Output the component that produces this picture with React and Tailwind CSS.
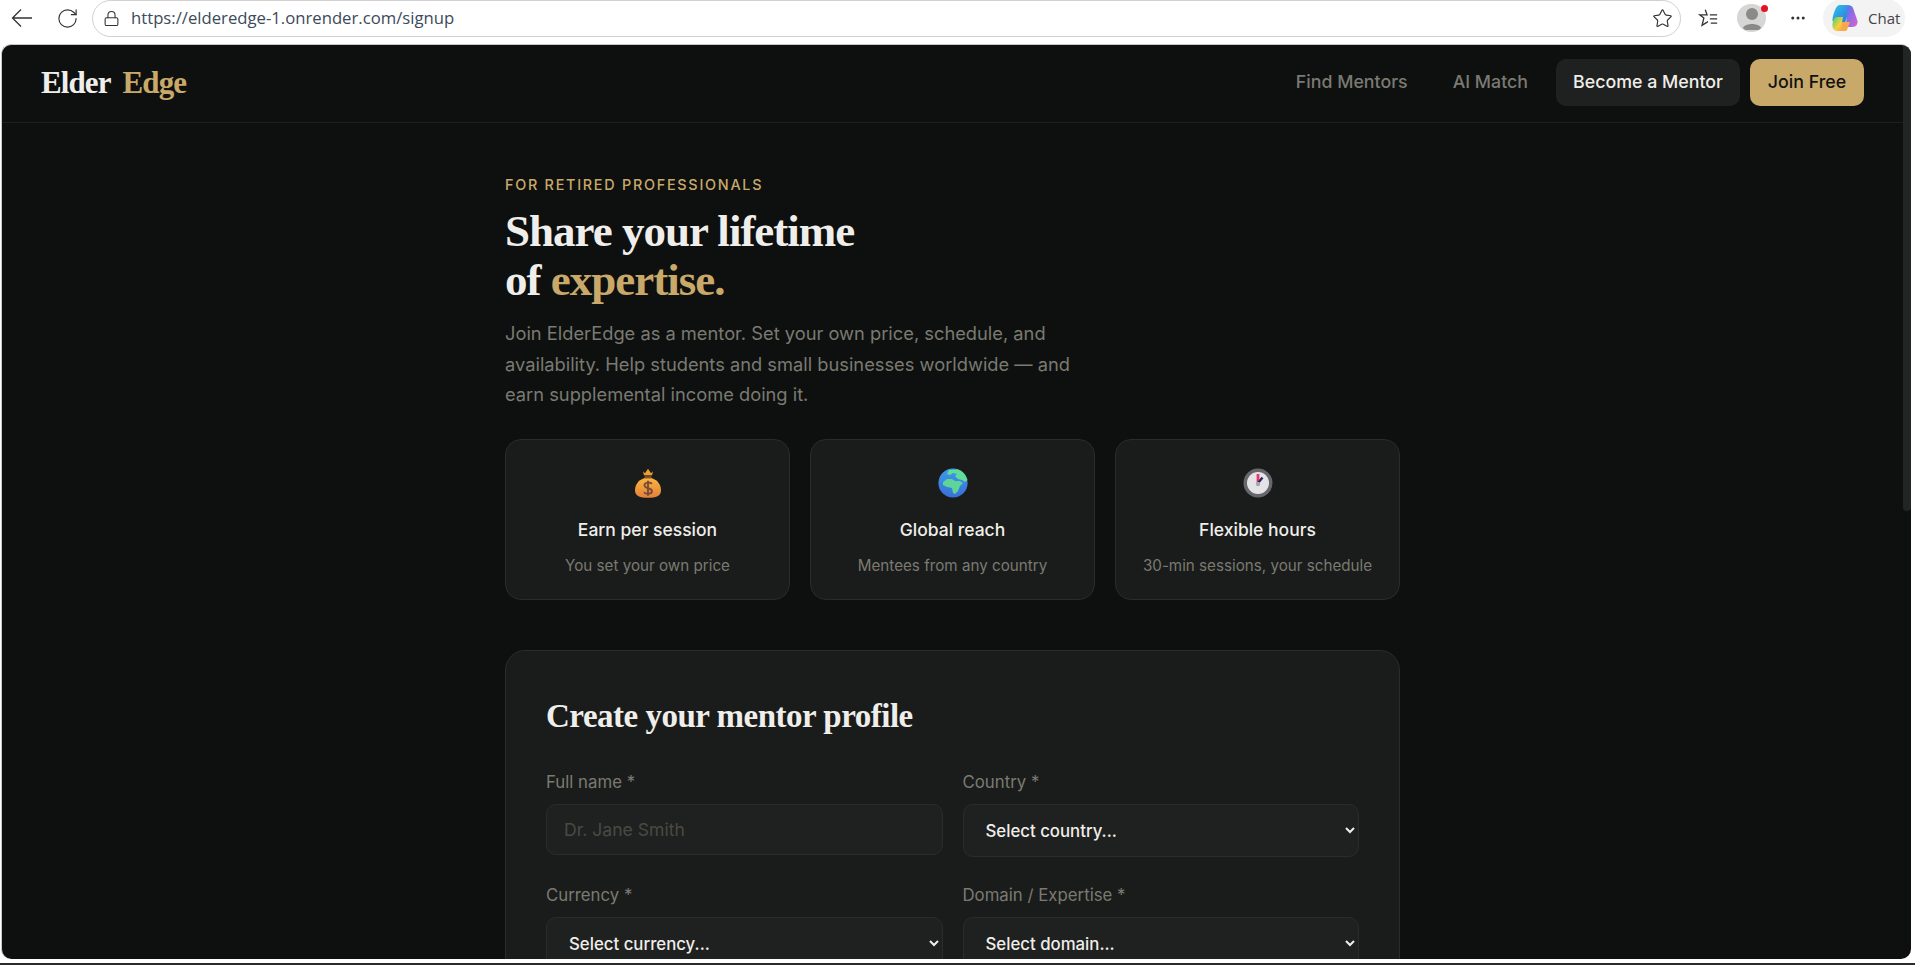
import { RotateCw, Lock, Star, MoreHorizontal } from 'lucide-react'

const sans = 'font-["Inter",sans-serif]'
const serif = 'font-["Liberation_Serif",serif]'

const MoneyBag = () => (
  <svg width="26" height="30" viewBox="2 2 26 29.5">
    <defs>
      <linearGradient id="bag" x1="0" y1="0" x2="0" y2="1">
        <stop offset="0" stopColor="#fbb43c" />
        <stop offset="1" stopColor="#e2813a" />
      </linearGradient>
    </defs>
    <path d="M10 5 L12 7 L15 2.5 L18 7 L20 5 L19 9 H11 Z" fill="#f0a030" />
    <rect x="11.5" y="9" width="7" height="3" fill="#7a4a2a" />
    <path d="M11 12 H19 C25 14 28 19 28 24 C28 30 23 31.5 15 31.5 C7 31.5 2 30 2 24 C2 19 5 14 11 12 Z" fill="url(#bag)" />
    <path d="M19 17.5 C17 15.5 11.5 16 11.5 19 C11.5 23 19 21 19 25 C19 28 13 28.5 11 26 M15 14.5 V29.5" fill="none" stroke="#7a4a3a" strokeWidth="1.9" />
  </svg>
)

const Globe = () => (
  <svg width="30" height="30" viewBox="0 0 30 30">
    <defs>
      <linearGradient id="sea" x1="0" y1="0" x2="0" y2="1">
        <stop offset="0" stopColor="#3d9be8" />
        <stop offset="1" stopColor="#3a6fd8" />
      </linearGradient>
    </defs>
    <circle cx="15" cy="15" r="14.6" fill="url(#sea)" />
    <path d="M11 2 L20 1.5 C25 3 28 7 29.5 12 L27 14 L24 12 L20 11 L17 8 L19 6 L15 5 L12 7 L9 6 Z" fill="#62dc9a" />
    <path d="M5 14 L9 11 L14 11 L17 13 L22 13 L25 15 L22 18 L20 23 L17 26 L15 25 L14 20 L9 19 L5 17 Z" fill="#5ed39a" />
  </svg>
)

const Clock = () => (
  <svg width="30" height="30" viewBox="0 0 30 30">
    <circle cx="15" cy="15" r="14.5" fill="#67676b" />
    <circle cx="15" cy="15" r="11" fill="#e4e4e8" />
    <rect x="13.6" y="6" width="2.8" height="9" fill="#e8386a" />
    <path d="M15 15 L19.5 9.5" stroke="#32275e" strokeWidth="2.4" />
    <circle cx="15" cy="16" r="2.2" fill="#a9a9ad" />
  </svg>
)

const Copilot = () => (
  <svg width="26" height="28" viewBox="0 0 26 28">
    <defs>
      <linearGradient id="cpa" x1="0" y1="0" x2="1" y2="1">
        <stop offset="0" stopColor="#2fc4e8" />
        <stop offset="1" stopColor="#2f6fe0" />
      </linearGradient>
      <linearGradient id="cpb" x1="0" y1="0" x2="1" y2="1">
        <stop offset="0" stopColor="#3fd07a" />
        <stop offset="0.6" stopColor="#f5d13c" />
        <stop offset="1" stopColor="#f59a2c" />
      </linearGradient>
      <linearGradient id="cpc" x1="0" y1="0" x2="1" y2="1">
        <stop offset="0" stopColor="#4a78f0" />
        <stop offset="1" stopColor="#e060d0" />
      </linearGradient>
    </defs>
    <path d="M8 1 H16 C18 1 18.5 2.5 18 4 L13 19 H4 C1.5 19 0 17.5 0.5 15 C1.5 9 4 1 8 1 Z" fill="url(#cpa)" />
    <path d="M15 3 C17 0.5 20 1 21 4 L25.5 17 C26 20 24 23 20.5 23 L14 23 Z" fill="url(#cpc)" />
    <path d="M5 13 H11 L9 24 C8.5 26.5 7 27 5 27 C2 27 0 24 0.5 20 C1 16 2.5 13 5 13 Z" fill="url(#cpb)" />
    <path d="M10 18 H18 L15 26 C14.5 27 13 27 11 27 H6 C8 27 9 25 10 18 Z" fill="#f7a84a" />
  </svg>
)

const Toolbar = () => (
  <div className="flex h-[44px] shrink-0 items-center bg-white pb-[8px] pr-[10px]">
    <svg className="ml-[11px]" width="22" height="20" viewBox="0 0 22 20" fill="none" stroke="#333" strokeWidth="1.3">
      <path d="M21 10 H1.5 M10 1.5 L1.5 10 L10 18.5" />
    </svg>
    <RotateCw className="ml-[23px] size-[23px] text-[#333]" strokeWidth={1.2} />
    <div className="ml-[13px] flex h-[37px] flex-1 items-center rounded-[19px] border border-[#d0d0d0] pl-[10px] pr-[7px]">
      <Lock className="size-[17px] text-[#333]" strokeWidth={1.5} />
      <span className='ml-[11px] flex-1 font-["Open_Sans",sans-serif] text-[16.7px] text-[#3c4a5a]'>https://elderedge-1.onrender.com/signup</span>
      <Star className="size-[21px] text-[#333]" strokeWidth={1.3} />
    </div>
    <svg className="ml-[16px]" width="22" height="22" viewBox="0 0 24 24" fill="none" stroke="#333" strokeWidth="1.4">
      <path d="M9 3 L11 8.5 H3 L7.5 12 L5.5 20 L12 16" />
      <path d="M14 8.5 H22 M14 13 H22 M15 17.5 H22" />
    </svg>
    <div className="relative ml-[18px] flex h-[28px] w-[29px] items-center justify-center rounded-full bg-[#d6d6d4]">
      <svg width="24" height="28" viewBox="0 0 24 28" className="rounded-full">
        <circle cx="12" cy="10" r="6" fill="#8a8a88" />
        <path d="M2 26 C3 18 21 18 22 26 Z" fill="#8a8a88" />
      </svg>
      <span className="absolute right-[-2px] top-[1px] size-[7px] rounded-full bg-[#e81123]" />
    </div>
    <MoreHorizontal className="ml-[23px] size-[18px] text-[#333]" strokeWidth={2} />
    <div className="ml-[16px] flex h-[38px] w-[82px] items-center gap-[10px] rounded-[19px] bg-[#f3f3f3] pl-[9px]">
      <Copilot />
      <span className='font-["Open_Sans",sans-serif] text-[15px] text-[#444]'>Chat</span>
    </div>
  </div>
)

const Nav = () => (
  <nav className="flex h-[78px] shrink-0 items-center justify-between border-b border-[#1d1f1e] pb-[2px] pl-[39px] pr-[39px]">
    <div className={`${serif} flex gap-[12px] text-[31px] leading-none font-bold tracking-[-0.9px]`}>
      <span className="text-[#f0eeea]">Elder</span>
      <span className="text-[#c8a96a]">Edge</span>
    </div>
    <div className={`${sans} flex items-center text-[17.8px] font-medium`}>
      <a className="text-[#7a7a72]">Find Mentors</a>
      <a className="ml-[45px] text-[#7a7a72]">AI Match</a>
      <a className="ml-[28px] flex h-[47px] w-[184px] items-center justify-center rounded-[10px] bg-[#1f2120] text-[#f0eeea]">Become a Mentor</a>
      <a className="ml-[10px] flex h-[47px] w-[114px] items-center justify-center rounded-[10px] bg-[#c8a96a] text-[#111]">Join Free</a>
    </div>
  </nav>
)

const perks = [
  { icon: <MoneyBag />, title: 'Earn per session', sub: 'You set your own price' },
  { icon: <Globe />, title: 'Global reach', sub: 'Mentees from any country' },
  { icon: <Clock />, title: 'Flexible hours', sub: '30-min sessions, your schedule' },
]

const Label = ({ children }) => (
  <label className="mb-[10px] block text-[16.8px] leading-[24px] text-[#7a7a72]">{children}</label>
)

const Dropdown = ({ title, placeholder }) => (
  <div>
    <Label>{title}</Label>
    <select className="h-[53px] w-full rounded-[10px] border border-[#2a2c2b] bg-[#1f2120] pl-[18px] pr-[9px] text-[16.8px] font-medium text-[#f0eeea] outline-none">
      <option>{placeholder}</option>
    </select>
  </div>
)

export default function App() {
  return (
    <div className={`${sans} flex h-[965px] flex-col overflow-hidden bg-white`}>
      <Toolbar />
      <main className="ml-[1px] mr-[4px] flex min-h-0 flex-1 overflow-hidden rounded-[10px] border-t border-l border-[#c8c8c8] bg-[#0e100f]">
        <div className="min-w-0 flex-1">
          <Nav />
          <div className="mx-auto w-[895px] pt-[52px]">
            <p className="text-[14.4px] leading-[20px] font-medium tracking-[0.12em] text-[#c8a96a]">FOR RETIRED PROFESSIONALS</p>
            <h1 className={`${serif} mt-[12px] text-[45px] leading-[49px] font-bold tracking-[-1px] text-[#f0eeea]`}>
              Share your lifetime<br />of <span className="text-[#c8a96a]">expertise.</span>
            </h1>
            <p className="mt-[13px] max-w-[590px] text-[18.3px] leading-[30.5px] text-[#7a7a72]">
              Join ElderEdge as a mentor. Set your own price, schedule, and availability. Help students and small businesses worldwide — and earn supplemental income doing it.
            </p>
            <div className="mt-[29.5px] grid grid-cols-3 gap-[20px]">
              {perks.map(p => (
                <div key={p.title} className="flex h-[161px] flex-col items-center rounded-[16px] border border-[#2a2c2b] bg-[#1a1c1b] pt-[27px]">
                  <div className="flex h-[32px] items-center">{p.icon}</div>
                  <div className="mt-[19px] text-[17.5px] leading-[24px] font-medium text-[#f0eeea]">{p.title}</div>
                  <div className="mt-[13.5px] text-[15.2px] leading-[20px] text-[#7a7a72]">{p.sub}</div>
                </div>
              ))}
            </div>
            <section className="mt-[50px] rounded-t-[20px] border border-[#2a2c2b] bg-[#1a1c1b] px-[40px] pt-[45px] pb-[40px]">
              <h2 className={`${serif} text-[33px] leading-[40px] font-bold tracking-[-0.5px] text-[#f0eeea]`}>Create your mentor profile</h2>
              <div className="mt-[34px] grid grid-cols-2 gap-x-[20px] gap-y-[26px]">
                <div>
                  <Label>Full name *</Label>
                  <input
                    placeholder="Dr. Jane Smith"
                    className="h-[51px] w-full rounded-[10px] border border-[#2a2c2b] bg-[#1f2120] px-[17px] text-[17.6px] text-[#f0eeea] outline-none placeholder:text-[#4a4a44]"
                  />
                </div>
                <Dropdown title="Country *" placeholder="Select country..." />
                <Dropdown title="Currency *" placeholder="Select currency..." />
                <Dropdown title="Domain / Expertise *" placeholder="Select domain..." />
              </div>
            </section>
          </div>
        </div>
        {/* page scrollbar */}
        <div className="w-[8px] shrink-0">
          <div className="h-[466px] rounded-b-[4px] bg-[#232524]" />
        </div>
      </main>
      <div className="mt-[4px] h-[2px] shrink-0 bg-[#2b2b2b]" />
    </div>
  )
}
